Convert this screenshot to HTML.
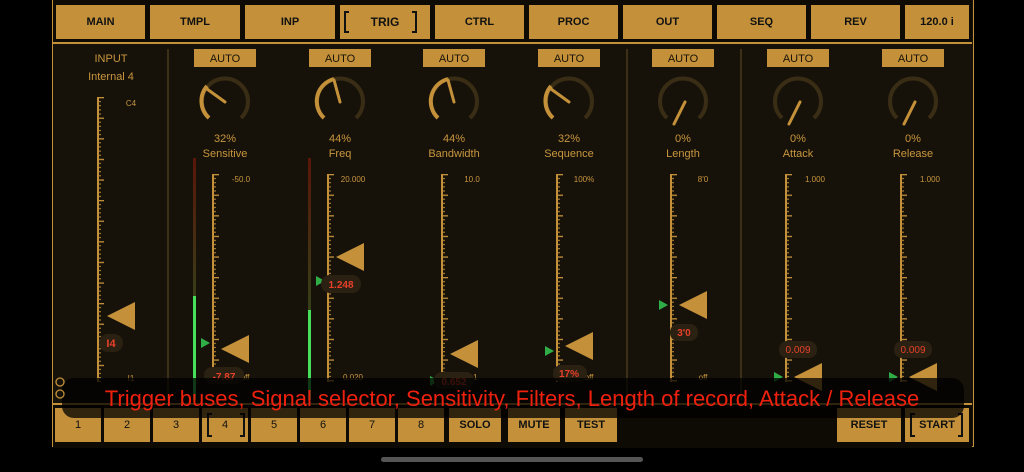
<!DOCTYPE html>
<html><head><meta charset="utf-8"><style>
body{margin:0;width:1024px;height:472px;background:#000;overflow:hidden;font-family:"Liberation Sans",sans-serif;}
.b{position:absolute;background:#c4913a;color:#111;font-weight:bold;font-size:11px;display:flex;align-items:center;justify-content:center;}
</style></head><body>
<div style="position:absolute;left:52px;top:0;width:920px;height:446px;background:#171209;border:1px solid #c4913a;border-top:none;"></div>
<div style="position:absolute;left:53px;top:0;width:919px;height:42px;background:#0e0b05;border-bottom:2px solid #c4913a;"></div>
<div style="position:absolute;left:53px;top:403px;width:919px;height:43px;background:#0e0b05;border-top:2px solid #c4913a;"></div>

<div class="b" style="left:56px;top:5px;width:89px;height:34px">MAIN</div>
<div class="b" style="left:150px;top:5px;width:90px;height:34px">TMPL</div>
<div class="b" style="left:245px;top:5px;width:90px;height:34px">INP</div>
<div class="b" style="left:340px;top:5px;width:90px;height:34px;font-size:12px">TRIG</div>
<div class="b" style="left:435px;top:5px;width:89px;height:34px">CTRL</div>
<div class="b" style="left:529px;top:5px;width:89px;height:34px">PROC</div>
<div class="b" style="left:623px;top:5px;width:89px;height:34px">OUT</div>
<div class="b" style="left:717px;top:5px;width:89px;height:34px">SEQ</div>
<div class="b" style="left:811px;top:5px;width:89px;height:34px">REV</div>
<div class="b" style="left:905px;top:5px;width:64px;height:34px">120.0 i</div>

<div class="b" style="left:55px;top:408px;width:46px;height:34px;font-weight:normal">1</div>
<div class="b" style="left:104px;top:408px;width:46px;height:34px;font-weight:normal">2</div>
<div class="b" style="left:153px;top:408px;width:46px;height:34px;font-weight:normal">3</div>
<div class="b" style="left:202px;top:408px;width:46px;height:34px;font-weight:normal">4</div>
<div class="b" style="left:251px;top:408px;width:46px;height:34px;font-weight:normal">5</div>
<div class="b" style="left:300px;top:408px;width:46px;height:34px;font-weight:normal">6</div>
<div class="b" style="left:349px;top:408px;width:46px;height:34px;font-weight:normal">7</div>
<div class="b" style="left:398px;top:408px;width:46px;height:34px;font-weight:normal">8</div>
<div class="b" style="left:449px;top:408px;width:52px;height:34px">SOLO</div>
<div class="b" style="left:508px;top:408px;width:52px;height:34px">MUTE</div>
<div class="b" style="left:565px;top:408px;width:52px;height:34px">TEST</div>
<div class="b" style="left:837px;top:408px;width:64px;height:34px">RESET</div>
<div class="b" style="left:905px;top:408px;width:64px;height:34px">START</div>

<svg width="1024" height="472" style="position:absolute;left:0;top:0" font-family="Liberation Sans, sans-serif">
<defs>
<pattern id="tk" width="10" height="20.6" patternUnits="userSpaceOnUse" x="0" y="0">
<rect x="0" y="0" width="7" height="1.3" fill="#c4913a"/>
<rect x="0" y="4.1" width="4" height="1" fill="#c4913a"/>
<rect x="0" y="8.2" width="4" height="1" fill="#c4913a"/>
<rect x="0" y="12.4" width="4" height="1" fill="#c4913a"/>
<rect x="0" y="16.5" width="4" height="1" fill="#c4913a"/>
</pattern>
<g id="rl"><rect x="0" y="0" width="8" height="208" fill="url(#tk)"/><rect x="0" y="0" width="2" height="208" fill="#c4913a"/><rect x="0" y="206" width="7" height="1.5" fill="#c4913a"/></g>
<linearGradient id="mg" x1="0" y1="0" x2="0" y2="1"><stop offset="0" stop-color="#5a1608"/><stop offset="1" stop-color="#1f5a22"/></linearGradient>
</defs>
<g fill="none" stroke="#111" stroke-width="2">
<path d="M349 12h-4v20h4M412 12h4v20h-4"/>
<path d="M212 414h-4v22h4M240 414h4v22h-4"/>
<path d="M915 414h-4v22h4M958 414h4v22h-4"/>
</g>
<line x1="168" y1="49" x2="168" y2="400" stroke="#4a3a1c" stroke-width="1.5"/>
<line x1="627" y1="49" x2="627" y2="400" stroke="#4a3a1c" stroke-width="1.5"/>
<line x1="741" y1="49" x2="741" y2="400" stroke="#4a3a1c" stroke-width="1.5"/>
<g fill="#c8963e" font-size="11" text-anchor="middle">
<text x="111" y="62">INPUT</text><text x="111" y="80">Internal 4</text>
</g>
<text x="131" y="106" fill="#c8963e" font-size="8" text-anchor="middle">C4</text>
<text x="131" y="381" fill="#c8963e" font-size="8" text-anchor="middle">I1</text>
<g transform="translate(97,97)"><rect x="0" y="0" width="8" height="285" fill="url(#tk)"/><rect x="0" y="0" width="2" height="285" fill="#c4913a"/></g>
<polygon points="107,316 135,302 135,330" fill="#c4913a"/>
<rect x="99" y="334" width="24" height="18" rx="9" fill="#2a2112"/>
<text x="111" y="347" fill="#e8402a" font-size="11" font-weight="bold" text-anchor="middle">I4</text>

<rect x="193" y="158" width="3" height="242" fill="url(#mg)"/>
<rect x="193" y="296" width="3" height="104" fill="#44e05a"/>
<rect x="308" y="158" width="3" height="242" fill="url(#mg)"/>
<rect x="308" y="310" width="3" height="90" fill="#44e05a"/>

<g fill="#c8963e" font-size="11" text-anchor="middle">
<rect x="194" y="49" width="62" height="18" fill="#c4913a"/><text x="225" y="62" fill="#1a1408">AUTO</text>
<rect x="309" y="49" width="62" height="18" fill="#c4913a"/><text x="340" y="62" fill="#1a1408">AUTO</text>
<rect x="423" y="49" width="62" height="18" fill="#c4913a"/><text x="454" y="62" fill="#1a1408">AUTO</text>
<rect x="538" y="49" width="62" height="18" fill="#c4913a"/><text x="569" y="62" fill="#1a1408">AUTO</text>
<rect x="652" y="49" width="62" height="18" fill="#c4913a"/><text x="683" y="62" fill="#1a1408">AUTO</text>
<rect x="767" y="49" width="62" height="18" fill="#c4913a"/><text x="798" y="62" fill="#1a1408">AUTO</text>
<rect x="882" y="49" width="62" height="18" fill="#c4913a"/><text x="913" y="62" fill="#1a1408">AUTO</text>
<text x="225" y="142">32%</text><text x="225" y="157">Sensitive</text>
<text x="340" y="142">44%</text><text x="340" y="157">Freq</text>
<text x="454" y="142">44%</text><text x="454" y="157">Bandwidth</text>
<text x="569" y="142">32%</text><text x="569" y="157">Sequence</text>
<text x="683" y="142">0%</text><text x="683" y="157">Length</text>
<text x="798" y="142">0%</text><text x="798" y="157">Attack</text>
<text x="913" y="142">0%</text><text x="913" y="157">Release</text>
</g>
<g fill="none" stroke-width="4">
<g stroke="#3a2d15">
<path d="M209 118 A23 23 0 1 1 241 118"/><path d="M324 118 A23 23 0 1 1 356 118"/>
<path d="M438 118 A23 23 0 1 1 470 118"/><path d="M553 118 A23 23 0 1 1 585 118"/>
<path d="M667 118 A23 23 0 1 1 699 118"/><path d="M782 118 A23 23 0 1 1 814 118"/>
<path d="M897 118 A23 23 0 1 1 929 118"/>
</g>
<g stroke="#c4913a">
<path d="M209 118 A23 23 0 0 1 207 86"/><path d="M324 118 A23 23 0 0 1 334 79"/>
<path d="M438 118 A23 23 0 0 1 448 79"/><path d="M553 118 A23 23 0 0 1 551 86"/>
</g>
<g stroke="#c4913a" stroke-width="3" stroke-linecap="round">
<line x1="225" y1="102" x2="207" y2="89"/><line x1="340" y1="102" x2="334" y2="80"/>
<line x1="454" y1="102" x2="448" y2="80"/><line x1="569" y1="102" x2="551" y2="89"/>
<line x1="685" y1="102" x2="674" y2="124"/><line x1="800" y1="102" x2="789" y2="124"/>
<line x1="915" y1="102" x2="904" y2="124"/>
</g>
</g>
<use href="#rl" x="212" y="174"/><use href="#rl" x="327" y="174"/><use href="#rl" x="441" y="174"/>
<use href="#rl" x="556" y="174"/><use href="#rl" x="670" y="174"/><use href="#rl" x="785" y="174"/>
<use href="#rl" x="900" y="174"/>
<g fill="#c8963e" font-size="8" text-anchor="middle">
<text x="241" y="182">-50.0</text><text x="353" y="182">20.000</text><text x="472" y="182">10.0</text>
<text x="584" y="182">100%</text><text x="703" y="182">8'0</text><text x="815" y="182">1.000</text><text x="930" y="182">1.000</text>
<text x="245" y="380">off</text><text x="353" y="380">0.020</text><text x="472" y="380">0.1</text>
<text x="589" y="380">off</text><text x="703" y="380">off</text>
</g>
<g fill="#c4913a">
<polygon points="221,349 249,335 249,363"/><polygon points="336,257 364,243 364,271"/>
<polygon points="450,354 478,340 478,368"/><polygon points="565,346 593,332 593,360"/>
<polygon points="679,305 707,291 707,319"/><polygon points="794,377 822,363 822,391"/>
<polygon points="909,377 937,363 937,391"/>
</g>
<g fill="#2fae48">
<polygon points="201,338 210,343 201,348"/><polygon points="316,276 325,281 316,286"/>
<polygon points="430,376 439,381 430,386"/><polygon points="545,346 554,351 545,356"/>
<polygon points="659,300 668,305 659,310"/><polygon points="774,372 783,377 774,382"/>
<polygon points="889,372 898,377 889,382"/>
</g>
<g fill="#2a2112">
<rect x="204" y="367" width="40" height="17" rx="8"/><rect x="321" y="275" width="40" height="18" rx="9"/>
<rect x="434" y="372" width="40" height="17" rx="8"/><rect x="553" y="365" width="34" height="17" rx="8"/>
<rect x="670" y="324" width="28" height="17" rx="8"/><rect x="779" y="341" width="38" height="17" rx="8"/>
<rect x="894" y="341" width="38" height="17" rx="8"/>
</g>
<g fill="#e8402a" font-size="10" font-weight="bold" text-anchor="middle">
<text x="224" y="380">-7.87</text><text x="341" y="288">1.248</text><text x="454" y="385">0.652</text>
<text x="569" y="377">17%</text><text x="684" y="336">3'0</text>
<text x="798" y="353" font-weight="normal">0.009</text><text x="913" y="353" font-weight="normal">0.009</text>
</g>
<rect x="62" y="378" width="902" height="40" rx="12" fill="#000" fill-opacity="0.75"/>
<circle cx="60" cy="382" r="4" fill="none" stroke="#c4913a" stroke-width="1.3"/>
<circle cx="60" cy="394" r="4" fill="none" stroke="#c4913a" stroke-width="1.3"/>
<text x="512" y="406" fill="#f0200e" font-size="22" text-anchor="middle">Trigger buses, Signal selector, Sensitivity, Filters, Length of record, Attack / Release</text>
<rect x="381" y="457" width="262" height="5" rx="2.5" fill="#555"/>
</svg>
</body></html>
